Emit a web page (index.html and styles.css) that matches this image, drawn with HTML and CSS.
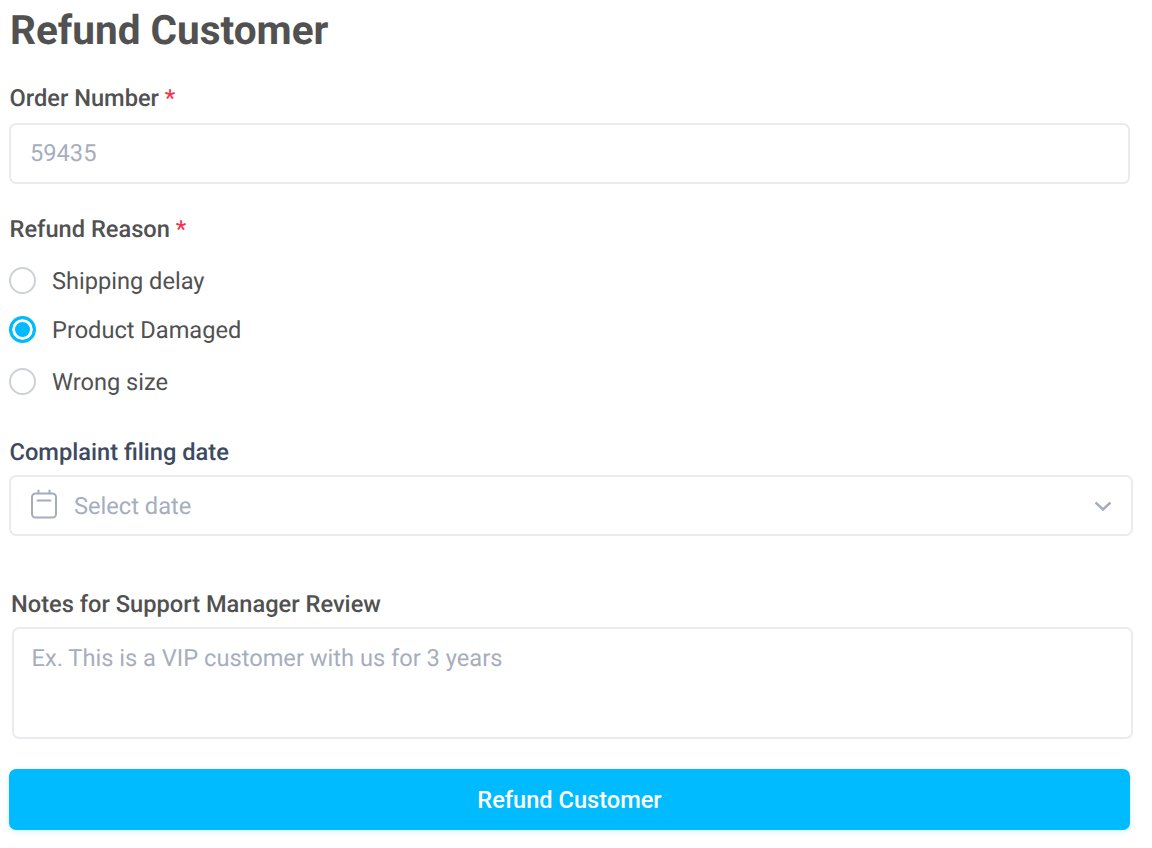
FILE: index.html
```html
<!DOCTYPE html>
<html lang="en">
<head>
<meta charset="utf-8">
<title>Refund Customer</title>
<link rel="stylesheet" href="styles.css">
</head>
<body>
<form class="form">
  <h1 class="title">Refund Customer</h1>
  <section class="field field-order">
    <div class="label">Order Number <span class="req">*</span></div>
    <div class="box box-order"><span class="ph ph-order">59435</span></div>
  </section>
  <section class="field field-reason">
    <div class="label">Refund Reason <span class="req">*</span></div>
    <div class="radios">
      <div class="radio r1"><span class="dot"></span><span class="radio-text">Shipping delay</span></div>
      <div class="radio r2"><span class="dot on"></span><span class="radio-text">Product Damaged</span></div>
      <div class="radio r3"><span class="dot"></span><span class="radio-text">Wrong size</span></div>
    </div>
  </section>
  <section class="field field-date">
    <div class="label label-dark">Complaint filing date</div>
    <div class="box box-date">
      <svg class="cal" width="28" height="30" viewBox="0 0 28 30" fill="none" stroke="#a5adbd" stroke-width="2" stroke-linecap="round"><rect x="2" y="4.500" width="24" height="24" rx="3.500"/><path d="M8.500 1.500V4.500M19.500 1.500V4.500M7.500 11.500H20.500"/></svg>
      <span class="ph">Select date</span>
      <svg class="chev" width="18" height="12" viewBox="0 0 18 12" fill="none" stroke="#a5adbd" stroke-width="2.400"><path d="M1.500 2.500L9 9.500L16.500 2.500"/></svg>
    </div>
  </section>
  <section class="field field-notes">
    <div class="label">Notes for Support Manager Review</div>
    <div class="box box-notes"><span class="ph">Ex. This is a VIP customer with us for 3 years</span></div>
  </section>
  <button type="button" class="submit">Refund Customer</button>
</form>
</body>
</html>
```
FILE: styles.css
```css
* { box-sizing: border-box; }
html, body { margin: 0; padding: 0; background: #fff; }
body { font-family: Roboto, "Liberation Sans", sans-serif; color: #515151; overflow: hidden; text-rendering: geometricPrecision; }
.form { width: 1152px; height: 848px; padding: 8px 0 0 9px; display: flex; flex-direction: column; opacity: .999; }
.title { margin: 0 0 0 1px; font-size: 40.500px; line-height: 44px; font-weight: 700; color: #515151; }
.field { display: flex; flex-direction: column; }
.label { font-size: 23.650px; line-height: 26px; font-weight: 500; color: #515151; margin-left: 0.500px; }
.label-dark { color: #3d4a5f; }
.req { color: #f5334f; }
.box { background: #fff; border: 2px solid #eaebef; border-radius: 7px; font-size: 23.650px; line-height: 28px; display: flex; align-items: center; }
.ph { color: #a6aebe; }
.ph-order { margin-top: -2px; }
.field-order { margin-top: 33px; }
.box-order { width: 1121px; height: 61px; margin-top: 12px; padding-left: 19px; }
.field-reason { margin-top: 32px; }
.radios { display: flex; flex-direction: column; }
.radio { display: flex; align-items: center; gap: 16px; font-size: 23.600px; line-height: 28px; color: #515151; height: 28px; }
.radio-text { margin-top: -2px; }
.r1 { margin-top: 26px; }
.r2 { margin-top: 21px; }
.r3 { margin-top: 24px; }
.dot { width: 27px; height: 27px; margin-top: -4px; border-radius: 50%; border: 2px solid #ccd0d9; background: #fff; flex: none; }
.dot.on { border: 3px solid #00bbff; box-shadow: inset 0 0 0 3px #fff; background: #00bbff; }
.field-date { margin-top: 42px; }
.box-date { width: 1124px; height: 61px; margin-top: 10px; padding: 0 19px; }
.cal { margin-right: 16px; flex: none; margin-top: -3px; }
.chev { margin-left: auto; flex: none; }
.field-notes { margin-top: 55px; margin-left: 3px; }
.field-notes .label { margin-left: -1px; }
.box-notes { width: 1121px; height: 112px; margin-top: 10px; padding: 15px 17.500px; align-items: flex-start; }
.submit { width: 1121px; height: 61px; margin-top: 30px; border: 0; border-radius: 7px; background: #00bbff; color: #fff; font: 500 23.600px/28px Roboto, "Liberation Sans", sans-serif; box-shadow: 0 2px 6px rgba(0,187,255,.15); }
```
